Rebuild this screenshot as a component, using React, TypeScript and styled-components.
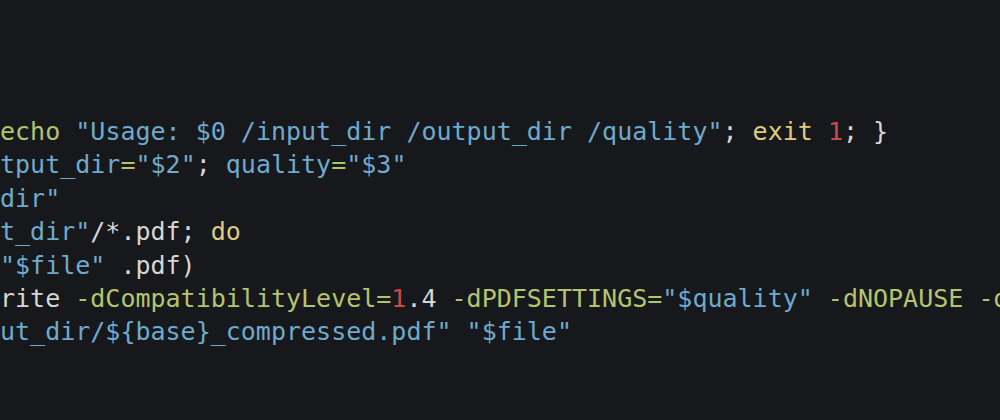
import React from "react";
import styled, { createGlobalStyle } from "styled-components";

const GlobalStyle = createGlobalStyle`
  html, body {
    margin: 0;
    padding: 0;
    background: #17181b;
  }
  body {
    width: 1000px;
    height: 420px;
    overflow: hidden;
  }
`;

const Editor = styled.div`
  width: 1000px;
  height: 420px;
  box-sizing: border-box;
  padding-top: 115px;
  background: #17181b;
  overflow: hidden;
`;

const Code = styled.pre`
  margin: 0;
  font-family: "DejaVu Sans Mono", "Liberation Mono", monospace;
  font-size: 25px;
  line-height: 33.4px;
  color: #d6d6d6;
  white-space: pre;
`;

const Line = styled.div`
  height: 33.4px;
`;

type Kind = "plain" | "cmd" | "str" | "kw" | "num";

const colors: Record<Kind, string> = {
  plain: "#d6d6d6",
  cmd: "#b3c46f",
  str: "#6eaacd",
  kw: "#dfcb80",
  num: "#c94a4b",
};

const Tok = styled.span<{ $kind: Kind }>`
  color: ${(p) => colors[p.$kind]};
`;

const lines: [Kind, string][][] = [
  [
    ["cmd", "echo"],
    ["plain", " "],
    ["str", '"Usage: $0 /input_dir /output_dir /quality"'],
    ["plain", "; "],
    ["kw", "exit"],
    ["plain", " "],
    ["num", "1"],
    ["plain", "; }"],
  ],
  [
    ["str", "tput_dir"],
    ["cmd", "="],
    ["str", '"$2"'],
    ["plain", "; "],
    ["str", "quality"],
    ["cmd", "="],
    ["str", '"$3"'],
  ],
  [["str", 'dir"']],
  [
    ["str", 't_dir"'],
    ["plain", "/*.pdf; "],
    ["kw", "do"],
  ],
  [
    ["str", '"$file"'],
    ["plain", " .pdf)"],
  ],
  [
    ["plain", "rite "],
    ["cmd", "-dCompatibilityLevel="],
    ["num", "1"],
    ["plain", ".4 "],
    ["cmd", "-dPDFSETTINGS="],
    ["str", '"$quality"'],
    ["plain", " "],
    ["cmd", "-dNOPAUSE"],
    ["plain", " "],
    ["cmd", "-dQUIET"],
  ],
  [
    ["str", 'ut_dir/${base}_compressed.pdf"'],
    ["plain", " "],
    ["str", '"$file"'],
  ],
];

export default function App() {
  return (
    <>
      <GlobalStyle />
      <Editor>
        <Code>
          {lines.map((toks, i) => (
            <Line key={i}>
              {toks.map(([k, t], j) => (
                <Tok key={j} $kind={k}>
                  {t}
                </Tok>
              ))}
            </Line>
          ))}
        </Code>
      </Editor>
    </>
  );
}
